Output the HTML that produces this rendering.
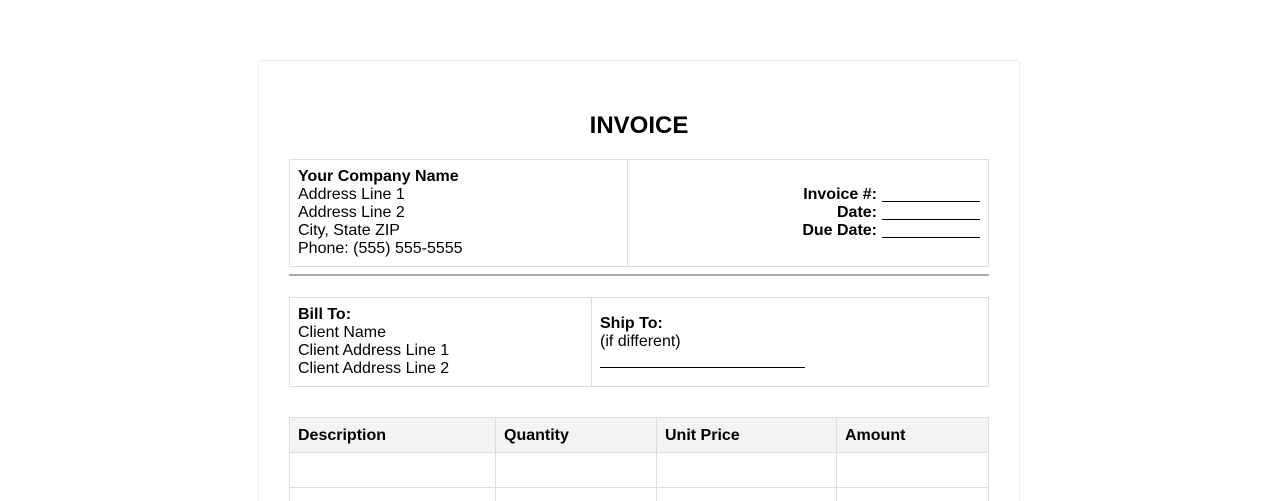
<!DOCTYPE html>
<html><head><style>
*{margin:0;padding:0;box-sizing:border-box}
html,body{width:1278px;height:501px;overflow:hidden}
body{background:#fff;font-family:"Liberation Sans",Arial,sans-serif;font-size:16px;color:#000}
.wrap{position:relative;width:1278px;height:501px;overflow:hidden}
.page{position:absolute;left:258px;top:60px;width:762px;height:460px;border:1px solid #ececec;border-radius:3px}
.abs{position:absolute}
h1{position:absolute;left:0;width:1278px;top:112px;text-align:center;font-size:24px;line-height:28px;font-weight:bold}
.box{position:absolute;border:1px solid #ddd}
.t{position:absolute;line-height:18px;white-space:nowrap}
b{font-weight:bold}
.ul{display:inline-block;width:98px;border-bottom:1px solid #000;height:14px;vertical-align:-3px;margin-left:5px}
table{position:absolute;left:289px;top:417px;width:700px;border-collapse:collapse}
td,th{border:1px solid #ddd;height:35px;text-align:left;padding:1px 8px 0;font-weight:bold}
th{background:#f3f3f3}
</style></head><body><div class="wrap">
<div class="page"></div>
<h1>INVOICE</h1>
<div class="box" style="left:289px;top:159px;width:700px;height:108px"></div>
<div class="abs" style="left:627px;top:160px;width:1px;height:106px;background:#ddd"></div>
<div class="t" style="left:298px;top:168px"><b>Your Company Name</b><br>Address Line 1<br>Address Line 2<br>City, State ZIP<br>Phone: (555) 555-5555</div>
<div class="t" style="right:298px;top:186px;text-align:right"><b>Invoice #:</b><span class="ul"></span><br><b>Date:</b><span class="ul"></span><br><b>Due Date:</b><span class="ul"></span></div>
<div class="abs" style="left:289px;top:274px;width:700px;height:2px;background:#aaa"></div>
<div class="box" style="left:289px;top:297px;width:700px;height:90px"></div>
<div class="abs" style="left:591px;top:298px;width:1px;height:88px;background:#ddd"></div>
<div class="t" style="left:298px;top:306px"><b>Bill To:</b><br>Client Name<br>Client Address Line 1<br>Client Address Line 2</div>
<div class="t" style="left:600px;top:315px"><b>Ship To:</b><br>(if different)</div>
<div class="abs" style="left:600px;top:367px;width:205px;height:1px;background:#000"></div>
<table>
<tr><th style="width:206px">Description</th><th style="width:161px">Quantity</th><th style="width:180px">Unit Price</th><th>Amount</th></tr>
<tr><td></td><td></td><td></td><td></td></tr>
<tr><td></td><td></td><td></td><td></td></tr>
</table>
</div></body></html>
